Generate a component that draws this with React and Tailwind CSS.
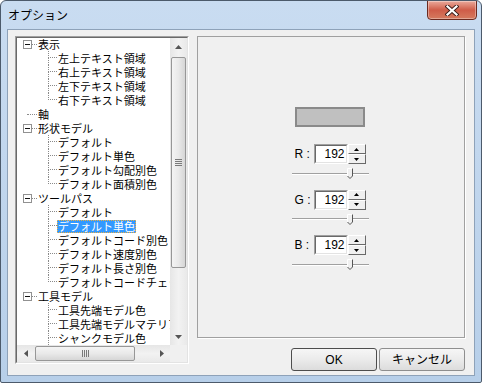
import React from 'react';

const tree = [
  { label: '表示', children: ['左上テキスト領域', '右上テキスト領域', '左下テキスト領域', '右下テキスト領域'] },
  { label: '軸' },
  { label: '形状モデル', children: ['デフォルト', 'デフォルト単色', 'デフォルト勾配別色', 'デフォルト面積別色'] },
  {
    label: 'ツールパス',
    children: ['デフォルト', 'デフォルト単色', 'デフォルトコード別色', 'デフォルト速度別色', 'デフォルト長さ別色', 'デフォルトコードチェック別色'],
    selected: 1,
  },
  { label: '工具モデル', children: ['工具先端モデル色', '工具先端モデルマテリアル', 'シャンクモデル色', 'ホルダモデル色', '工具全体モデル色'] },
];

const Arrow = ({ dir }) => {
  const pts = {
    up: '0,4 3.5,0 7,4',
    down: '0,0 3.5,4 7,0',
    left: '4,0 0,3.5 4,7',
    right: '0,0 4,3.5 0,7',
  }[dir];
  const vertical = dir === 'up' || dir === 'down';
  return (
    <svg width={vertical ? 7 : 4} height={vertical ? 4 : 7} className="block">
      <polygon points={pts} fill="#555" />
    </svg>
  );
};

const Expander = () => (
  <div className="w-[9px] h-[9px] border border-[#919191] bg-white flex items-center justify-center shrink-0">
    <div className="w-[5px] h-px bg-[#111]" />
  </div>
);

const TreeView = () => (
  <div className="w-[174px] h-[328px] border border-t-[#a0a0a0] border-l-[#a0a0a0] border-r-white border-b-white">
    <div className="w-full h-full border border-t-[#696969] border-l-[#696969] border-r-[#e3e3e3] border-b-[#e3e3e3] bg-white flex flex-col">
      <div className="flex flex-1 min-h-0">
        <div className="w-[153px] overflow-hidden text-[11px] text-black font-['Noto_Sans_CJK_JP',sans-serif]">
          <div className="-mt-[1px]">
            {tree.map((node) => (
              <React.Fragment key={node.label}>
                <div className="flex items-center h-[14px] whitespace-nowrap">
                  <div className="w-[6px] shrink-0" />
                  {node.children ? (
                    <>
                      <Expander />
                      <div className="w-[5px] shrink-0 border-t border-dotted border-[#8a8a8a]" />
                    </>
                  ) : (
                    <>
                      <div className="w-[4px] shrink-0" />
                      <div className="w-[10px] shrink-0 border-t border-dotted border-[#8a8a8a]" />
                    </>
                  )}
                  <span className="px-[1px] leading-[13px]">{node.label}</span>
                </div>
                {node.children &&
                  node.children.map((c, i) => {
                    const last = i === node.children.length - 1;
                    const sel = node.selected === i;
                    return (
                      <div key={c + i} className="flex items-stretch h-[14px] whitespace-nowrap">
                        <div className="w-[31px] shrink-0" />
                        <div className="w-[9px] shrink-0 flex flex-col">
                          <div className="h-[7px] border-l border-b border-dotted border-[#8a8a8a]" />
                          <div className={last ? 'flex-1' : 'flex-1 border-l border-dotted border-[#8a8a8a]'} />
                        </div>
                        <div className="flex items-center">
                          <span
                            className={
                              sel
                                ? 'px-[1px] h-[13px] leading-[13px] bg-[#3399ff] text-white outline-1 outline-dotted -outline-offset-1 outline-[#f0b040]'
                                : 'px-[1px] h-[13px] leading-[13px]'
                            }
                          >
                            {c}
                          </span>
                        </div>
                      </div>
                    );
                  })}
              </React.Fragment>
            ))}
          </div>
        </div>
        <div className="w-[17px] flex flex-col bg-gradient-to-r from-[#e6e6e6] via-[#f2f2f2] to-[#e9e9e9]">
          <div className="h-[17px] flex items-center justify-center">
            <Arrow dir="up" />
          </div>
          <div className="mt-[2px] mx-[1px] h-[211px] rounded-[2px] border border-[#979797] bg-gradient-to-r from-[#f4f4f4] via-[#e9e9e9] to-[#d6d6d6] flex flex-col items-center justify-center gap-[1px]">
            <div className="w-[7px] h-px bg-[#7a7a7a]" />
            <div className="w-[7px] h-px bg-[#7a7a7a]" />
            <div className="w-[7px] h-px bg-[#7a7a7a]" />
            <div className="w-[7px] h-px bg-[#7a7a7a]" />
          </div>
          <div className="flex-1" />
          <div className="h-[17px] flex items-center justify-center">
            <Arrow dir="down" />
          </div>
        </div>
      </div>
      <div className="h-[17px] flex">
        <div className="w-[153px] flex bg-gradient-to-b from-[#e6e6e6] via-[#f2f2f2] to-[#e9e9e9]">
          <div className="w-[17px] flex items-center justify-center">
            <Arrow dir="left" />
          </div>
          <div className="ml-[1px] my-[1px] w-[100px] rounded-[2px] border border-[#979797] bg-gradient-to-b from-[#f4f4f4] via-[#e9e9e9] to-[#d6d6d6] flex items-center justify-center gap-[1px]">
            <div className="w-px h-[7px] bg-[#7a7a7a]" />
            <div className="w-px h-[7px] bg-[#7a7a7a]" />
            <div className="w-px h-[7px] bg-[#7a7a7a]" />
            <div className="w-px h-[7px] bg-[#7a7a7a]" />
          </div>
          <div className="flex-1" />
          <div className="w-[17px] flex items-center justify-center">
            <Arrow dir="right" />
          </div>
        </div>
        <div className="w-[17px] bg-[#f0f0f0]" />
      </div>
    </div>
  </div>
);

const Spinner = () => (
  <div className="w-[18px] h-[20px] flex flex-col">
    {['up', 'down'].map((d) => (
      <div
        key={d}
        className="h-[10px] bg-[#f0f0f0] border border-t-white border-l-white border-r-[#696969] border-b-[#696969] flex items-center justify-center"
      >
        <svg width="5" height="3" className="block">
          <polygon points={d === 'up' ? '0,3 2.5,0 5,3' : '0,0 2.5,3 5,0'} fill="#000" />
        </svg>
      </div>
    ))}
  </div>
);

const Channel = ({ name }) => (
  <div className="h-[45.5px] flex flex-col items-center">
    <div className="flex items-center h-[20px]">
      <span className="w-[19px] text-[12px] text-black">{name} :</span>
      <div className="w-[34px] h-[20px] border border-t-[#a0a0a0] border-l-[#a0a0a0] border-r-white border-b-white">
        <div className="w-full h-full border border-t-[#696969] border-l-[#696969] border-r-[#e3e3e3] border-b-[#e3e3e3] bg-white flex items-center justify-end pr-[1px] text-[12px] text-black">
          192
        </div>
      </div>
      <Spinner />
    </div>
    <div className="mt-[4px] w-[77px] h-[11px] relative flex items-center">
      <div className="w-full h-[2px] border-t border-[#a0a0a0] border-b border-b-white" />
      <svg width="6" height="11" className="absolute left-[55px] top-0">
        <polygon points="0,0 6,0 6,8 3,11 0,8" fill="#f0f0f0" stroke="none" />
        <polyline points="0.5,8 0.5,0.5 5.5,0.5" fill="none" stroke="#fff" />
        <polyline points="5.5,0.5 5.5,8 3,10.5 0.5,8" fill="none" stroke="#555" />
      </svg>
    </div>
  </div>
);

const Button = ({ children, def }) => (
  <button
    className={
      'w-[86px] h-[23px] rounded-[3px] border text-[12px] text-black bg-gradient-to-b from-[#f6f6f6] via-[#ebebeb] to-[#dcdcdc] ' +
      (def ? 'border-[#4d4d4d]' : 'border-[#8e8e8e]')
    }
  >
    {children}
  </button>
);

export default function App() {
  return (
    <div className="w-[482px] h-[383px] rounded-t-[6px] rounded-b-[2px] border border-[#4c5a6b] bg-gradient-to-b from-[#c9dcf1] to-[#b7cfe9] flex flex-col font-['Liberation_Sans','Noto_Sans_CJK_JP',sans-serif] overflow-hidden">
      <div className="h-[28px] flex justify-between pl-[7px] pr-[4px]">
        <span className="mt-[6px] text-[12px] leading-[16px] text-black font-['Noto_Sans_CJK_JP',sans-serif]">
          オプション
        </span>
        <div className="-mt-px w-[50px] h-[20px] rounded-b-[4px] border border-[#6b2a20] bg-gradient-to-b from-[#e9a99b] via-[#cf5c48] to-[#d57a5f] flex items-center justify-center shadow-[inset_0_0_0_1px_rgba(255,255,255,0.35)]">
          <svg width="14" height="11" viewBox="0 0 14 11" className="block">
            <path d="M2.5 1.5 L11.5 9.5 M11.5 1.5 L2.5 9.5" stroke="#3b1d1a" strokeWidth="4" strokeLinecap="square" />
            <path d="M2.5 1.5 L11.5 9.5 M11.5 1.5 L2.5 9.5" stroke="#ffffff" strokeWidth="2.2" strokeLinecap="square" />
          </svg>
        </div>
      </div>
      <div className="mx-[6px] mb-[6px] flex-1 border border-[#8ea2b9] bg-[#f0f0f0] flex pl-[7px] pt-[6px]">
        <TreeView />
        <div className="ml-[8px] flex flex-col">
          <div className="w-[268px] h-[302px] border border-[#a0a0a0] shadow-[1px_1px_0_#ffffff] flex flex-col items-center pr-[2px]">
            <div className="mt-[70px] w-[70px] h-[20px] border-2 border-[#8a8a8a] bg-[#c0c0c0]" />
            <div className="mt-[17px] flex flex-col">
              <Channel name="R" />
              <Channel name="G" />
              <Channel name="B" />
            </div>
          </div>
          <div className="mt-[10px] flex justify-end gap-[2px]">
            <Button def>OK</Button>
            <Button>キャンセル</Button>
          </div>
        </div>
      </div>
    </div>
  );
}
